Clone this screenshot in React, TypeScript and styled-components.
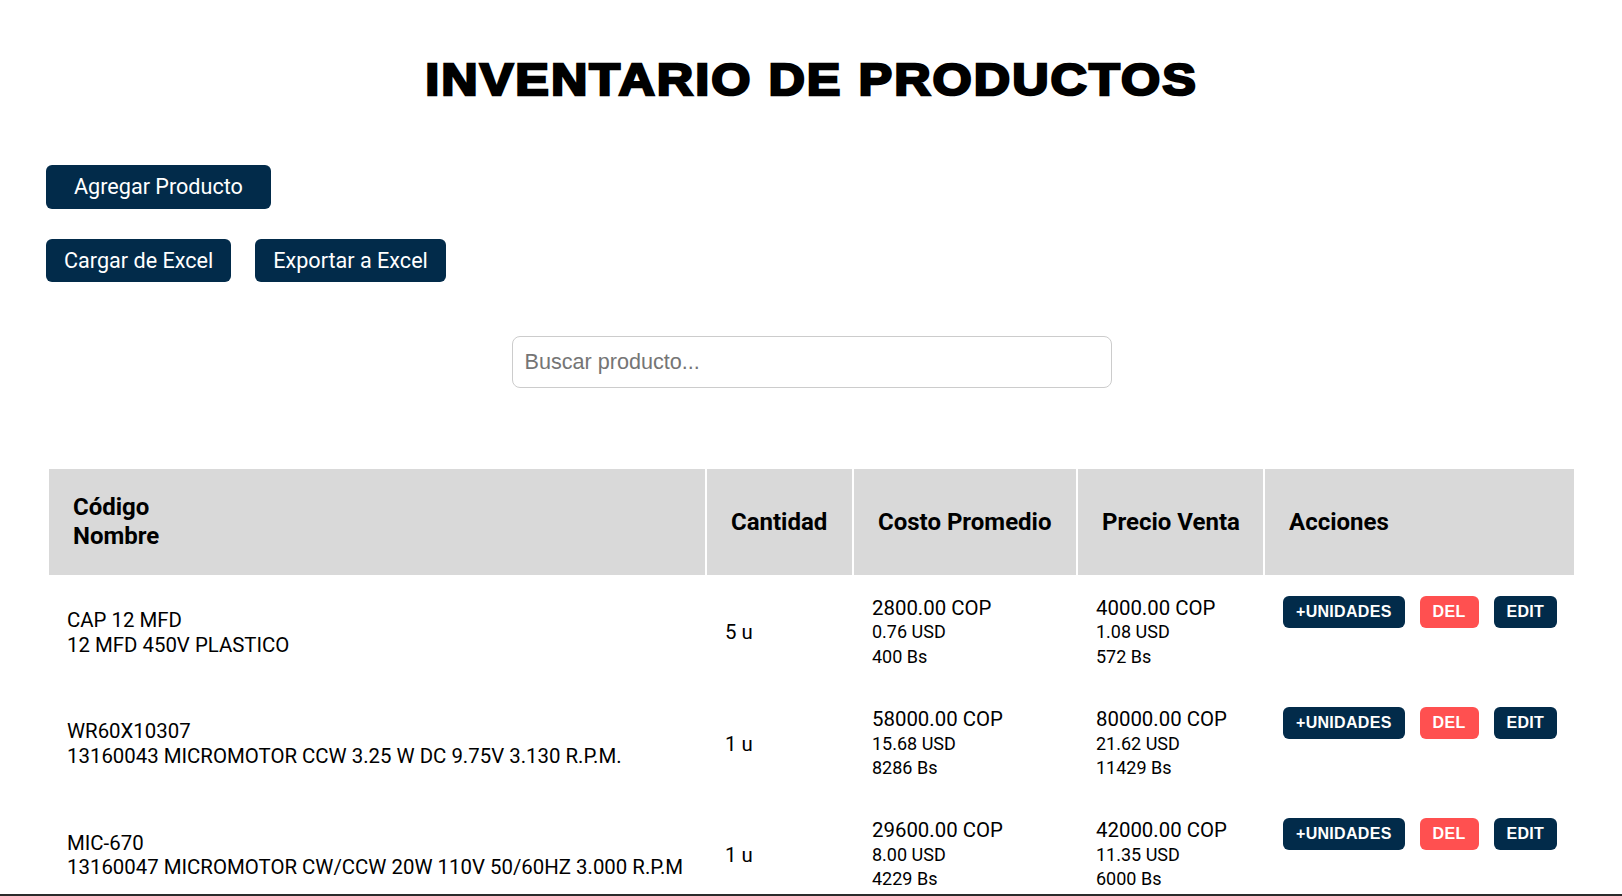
import React from "react";
import styled, { createGlobalStyle } from "styled-components";

const GlobalStyle = createGlobalStyle`
  html, body {
    margin: 0;
    padding: 0;
    background: #ffffff;
    font-family: Roboto, "Liberation Sans", Arial, sans-serif;
    color: #000;
  }
`;

const NAVY = "#022b4a";
const RED = "#ff5050";

const Page = styled.div`
  padding: 0 46px 0 47px;
`;

const Title = styled.h1`
  margin: 52px 0 0;
  font-family: "Liberation Sans", Arial, sans-serif;
  font-weight: 900;
  font-size: 45px;
  line-height: 56px;
  letter-spacing: 1.8px;
  text-align: center;
  color: #000;
  -webkit-text-stroke: 2.4px #000;
  transform: scaleX(1.12);
`;

const Toolbar = styled.div`
  display: flex;
  flex-direction: column;
  align-items: flex-start;
  gap: 30px;
  margin-top: 57px;
  margin-left: -1px;
`;

const ButtonRow = styled.div`
  display: flex;
  gap: 24px;
`;

const PrimaryButton = styled.button<{ $padX?: number }>`
  background: ${NAVY};
  color: #fff;
  border: none;
  border-radius: 6px;
  padding: 9px ${(p) => p.$padX ?? 18}px;
  font-family: Roboto, sans-serif;
  font-size: 21.6px;
  line-height: 25.5px;
  cursor: pointer;
`;

const SearchWrap = styled.div`
  display: flex;
  justify-content: center;
  margin-top: 54px;
`;

const SearchInput = styled.input`
  box-sizing: border-box;
  width: 600px;
  height: 52px;
  padding: 0 12px;
  border: 1px solid #cccccc;
  border-radius: 8px;
  font-family: "Liberation Sans", Arial, sans-serif;
  font-size: 21.6px;
  color: #333;
  outline: none;
  &::placeholder {
    color: #757575;
  }
`;

const Table = styled.table`
  width: 100%;
  margin-top: 79px;
  border-collapse: separate;
  border-spacing: 2px;
  table-layout: fixed;
`;

const HeadCell = styled.th`
  background: #d9d9d9;
  padding: 24px;
  text-align: left;
  white-space: nowrap;
  font-family: Roboto, sans-serif;
  font-weight: 700;
  font-size: 24px;
  line-height: 29px;
  vertical-align: middle;
`;

const Cell = styled.td<{ $top?: boolean }>`
  padding: 19px 18px 17px;
  font-family: Roboto, sans-serif;
  font-size: 20.4px;
  line-height: 24.4px;
  vertical-align: ${(p) => (p.$top ? "top" : "middle")};
`;

const Line = styled.div<{ $small?: boolean }>`
  font-size: ${(p) => (p.$small ? 18 : 20.4)}px;
  line-height: 24.4px;
`;

const Actions = styled.div`
  display: flex;
  gap: 15px;
`;

const ActionButton = styled.button<{ $danger?: boolean }>`
  background: ${(p) => (p.$danger ? RED : NAVY)};
  color: #fff;
  border: none;
  border-radius: 6px;
  padding: 8px 13px;
  font-family: "Liberation Sans", Arial, sans-serif;
  font-weight: 700;
  font-size: 16px;
  line-height: 16px;
  letter-spacing: 0.3px;
  cursor: pointer;
`;

const BottomEdge = styled.div`
  position: fixed;
  left: 0;
  right: 0;
  bottom: 0;
  height: 2px;
  background: #2b2b2b;
`;

type Product = {
  code: string;
  name: string;
  qty: string;
  cost: [string, string, string];
  price: [string, string, string];
};

const products: Product[] = [
  {
    code: "CAP 12 MFD",
    name: "12 MFD 450V PLASTICO",
    qty: "5 u",
    cost: ["2800.00 COP", "0.76 USD", "400 Bs"],
    price: ["4000.00 COP", "1.08 USD", "572 Bs"],
  },
  {
    code: "WR60X10307",
    name: "13160043 MICROMOTOR CCW 3.25 W DC 9.75V 3.130 R.P.M.",
    qty: "1 u",
    cost: ["58000.00 COP", "15.68 USD", "8286 Bs"],
    price: ["80000.00 COP", "21.62 USD", "11429 Bs"],
  },
  {
    code: "MIC-670",
    name: "13160047 MICROMOTOR CW/CCW 20W 110V 50/60HZ 3.000 R.P.M",
    qty: "1 u",
    cost: ["29600.00 COP", "8.00 USD", "4229 Bs"],
    price: ["42000.00 COP", "11.35 USD", "6000 Bs"],
  },
];

const Money = ({ values }: { values: [string, string, string] }) => (
  <>
    <Line>{values[0]}</Line>
    <Line $small>{values[1]}</Line>
    <Line $small>{values[2]}</Line>
  </>
);

export default function App() {
  return (
    <>
      <GlobalStyle />
      <Page>
        <Title>INVENTARIO DE PRODUCTOS</Title>
        <Toolbar>
          <PrimaryButton $padX={28}>Agregar Producto</PrimaryButton>
          <ButtonRow>
            <PrimaryButton>Cargar de Excel</PrimaryButton>
            <PrimaryButton>Exportar a Excel</PrimaryButton>
          </ButtonRow>
        </Toolbar>
        <SearchWrap>
          <SearchInput placeholder="Buscar producto..." />
        </SearchWrap>
        <Table>
          <colgroup>
            <col />
            <col style={{ width: 145 }} />
            <col style={{ width: 222 }} />
            <col style={{ width: 185 }} />
            <col style={{ width: 309 }} />
          </colgroup>
          <thead>
            <tr>
              <HeadCell>
                Código
                <br />
                Nombre
              </HeadCell>
              <HeadCell>Cantidad</HeadCell>
              <HeadCell>Costo Promedio</HeadCell>
              <HeadCell>Precio Venta</HeadCell>
              <HeadCell>Acciones</HeadCell>
            </tr>
          </thead>
          <tbody>
            {products.map((p) => (
              <tr key={p.code}>
                <Cell>
                  <Line>{p.code}</Line>
                  <Line>{p.name}</Line>
                </Cell>
                <Cell>{p.qty}</Cell>
                <Cell>
                  <Money values={p.cost} />
                </Cell>
                <Cell>
                  <Money values={p.price} />
                </Cell>
                <Cell $top>
                  <Actions>
                    <ActionButton>+UNIDADES</ActionButton>
                    <ActionButton $danger>DEL</ActionButton>
                    <ActionButton>EDIT</ActionButton>
                  </Actions>
                </Cell>
              </tr>
            ))}
          </tbody>
        </Table>
      </Page>
      <BottomEdge />
    </>
  );
}
